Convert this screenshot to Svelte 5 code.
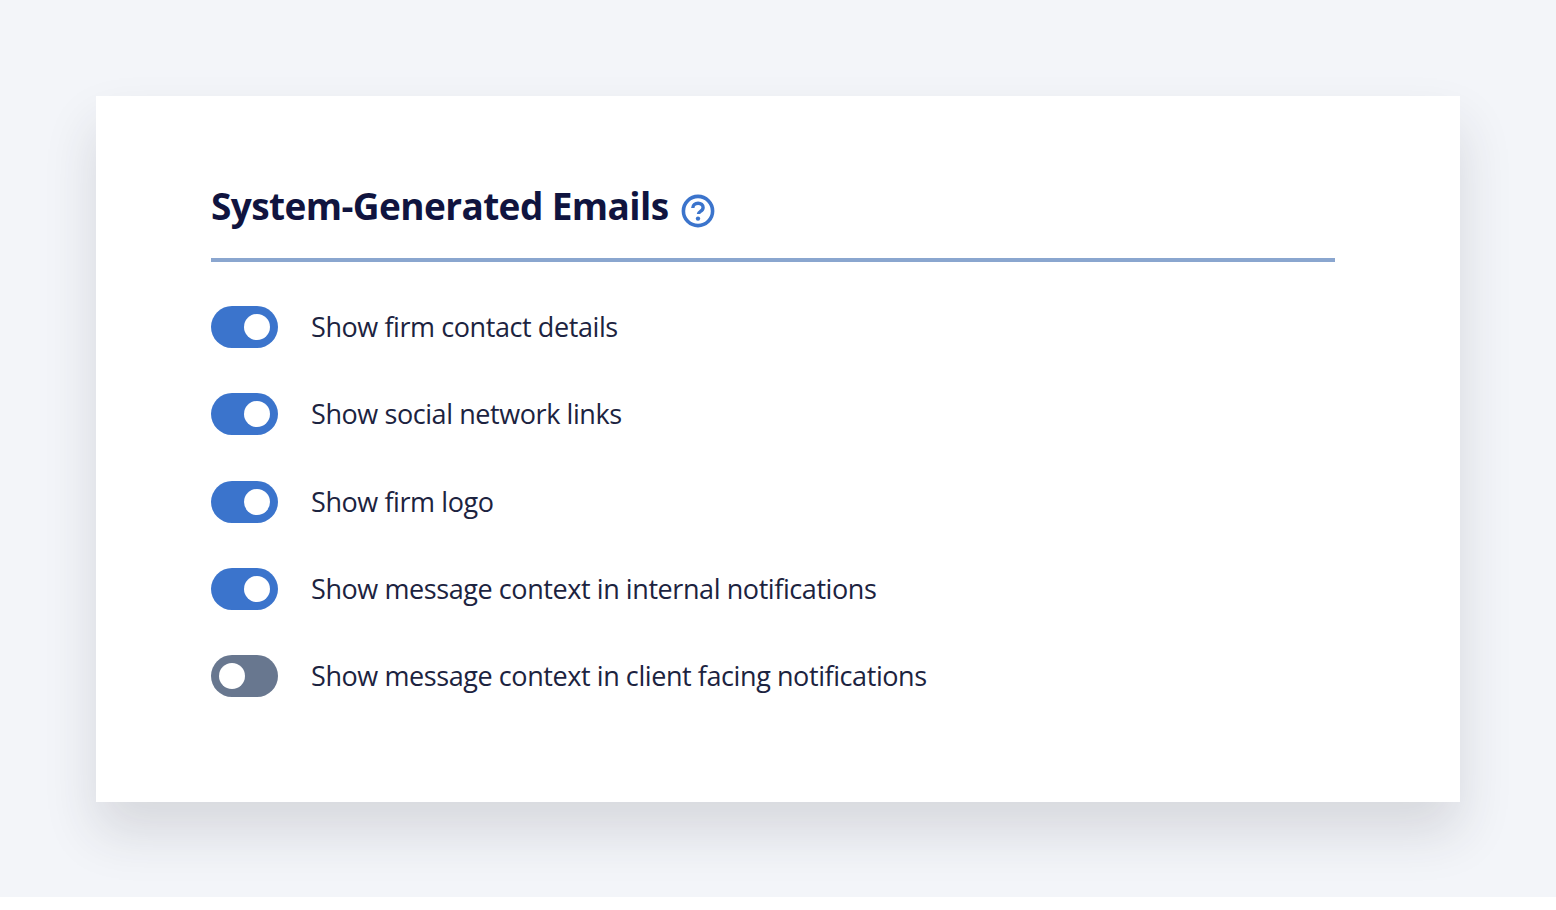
<script>
  const rows = [
    { label: 'Show firm contact details', on: true },
    { label: 'Show social network links', on: true },
    { label: 'Show firm logo', on: true },
    { label: 'Show message context in internal notifications', on: true },
    { label: 'Show message context in client facing notifications', on: false }
  ];
</script>

<div class="page">
  <section class="card">
    <header>
      <h2>System-Generated Emails</h2>
      <svg class="help" viewBox="0 0 34 34" width="34" height="34" aria-hidden="true">
        <circle cx="17" cy="17" r="14.6" fill="none" stroke="#3b74cc" stroke-width="3.6" />
        <path d="M11.8 14c0-3 2.3-4.8 5.3-4.8 2.9 0 5 1.7 5 4.2 0 1.9-1 3-2.6 4-1.3.8-2 1.4-2 2.7" fill="none" stroke="#3b74cc" stroke-width="3.4" />
        <circle cx="17" cy="24.6" r="2.2" fill="#3b74cc" />
      </svg>
    </header>
    <ul>
      {#each rows as row}
        <li>
          <span class="toggle" class:on={row.on}><i></i></span>
          <span class="label">{row.label}</span>
        </li>
      {/each}
    </ul>
  </section>
</div>

<style>
  :global(body) { background: #fff; }
  .page { height: 897px; box-sizing: border-box; padding: 96px 96px 0; background: #f3f5f9; overflow: hidden; }
  .card { height: 706px; box-sizing: border-box; padding: 83px 125px 0 115px; background: #fff; box-shadow: 0 30px 50px rgba(40, 44, 60, .14); }
  header { display: flex; align-items: center; gap: 13px; height: 79px; border-bottom: 4px solid #8aa6cf; box-sizing: content-box; }
  h2 { margin: 0 0 26px; font: 700 37px/55px "Open Sans", sans-serif; color: #10143f; letter-spacing: -.6px; }
  .help { margin: 0 0 15px; }
  ul { list-style: none; margin: 44px 0 0; padding: 0; display: grid; gap: 45.25px; }
  li { display: flex; align-items: center; gap: 33px; height: 42px; }
  .toggle { width: 67px; height: 42px; border-radius: 21px; background: #68778f; display: flex; align-items: center; padding: 0 8px; box-sizing: border-box; }
  .toggle.on { background: #3b74cc; justify-content: flex-end; }
  .toggle i { width: 26px; height: 26px; border-radius: 50%; background: #fff; }
  .label { font: 400 27px/40px "Open Sans", sans-serif; color: #1c2340; letter-spacing: -.42px; }
</style>
